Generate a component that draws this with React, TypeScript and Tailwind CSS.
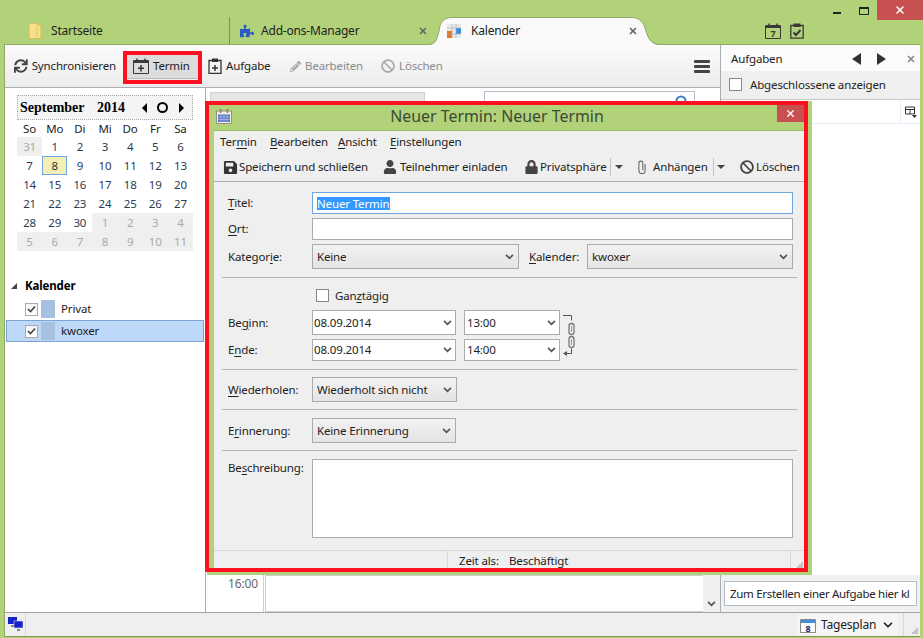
import { ChevronDown, X } from "lucide-react";
import type { ReactNode } from "react";
import { FaBan, FaLock, FaPencilAlt, FaPuzzlePiece, FaSave, FaSync, FaUser } from "react-icons/fa";

const Key = ({ children }: { children: ReactNode }) => (
  <span className="underline underline-offset-2 decoration-1">{children}</span>
);

const Chevron = ({ className = "" }: { className?: string }) => (
  <svg viewBox="0 0 10 7" className={`w-[9px] h-[6px] shrink-0 ${className}`}>
    <path d="M1 1l4 4 4-4" fill="none" stroke="#555" strokeWidth="2" />
  </svg>
);

const CalIcon = ({ children, className = "" }: { children?: ReactNode; className?: string }) => (
  <svg viewBox="0 0 16 16" className={`w-4 h-4 shrink-0 ${className}`}>
    <path d="M.5 2.500h15v13H.5z" fill="none" stroke="#3a3a3a" />
    <path d="M1 2.500h14v2.500H1z" fill="#3a3a3a" />
    <path d="M4 .5v3M12 .5v3" stroke="#3a3a3a" strokeWidth="1.500" />
    {children}
  </svg>
);

const Grip = ({ className = "" }: { className?: string }) => (
  <svg viewBox="0 0 6 6" className={`w-[6px] h-[6px] ${className}`}>
    <path d="M4 0h2v2H4zM2 2h2v2H2zM4 2h2v2H4zM0 4h2v2H0zM2 4h2v2H2zM4 4h2v2H4z" fill="#c4c4c4" />
  </svg>
);

const DownArrow = ({ className = "" }: { className?: string }) => (
  <span className={`w-0 h-0 border-x-[4px] border-x-transparent border-t-[4px] border-t-[#444] ${className}`} />
);

const Tool = ({ icon, label, dim, className = "" }: { icon: ReactNode; label: string; dim?: boolean; className?: string }) => (
  <div className={`flex items-center gap-[4px] h-[25px] whitespace-nowrap shrink-0 ${dim ? "text-[#8a8a8a]" : "text-[#222]"} ${className}`}>
    {icon}
    <span>{label}</span>
  </div>
);

const days = [
  [31, 1, 2, 3, 4, 5, 6],
  [7, 8, 9, 10, 11, 12, 13],
  [14, 15, 16, 17, 18, 19, 20],
  [21, 22, 23, 24, 25, 26, 27],
  [28, 29, 30, 1, 2, 3, 4],
  [5, 6, 7, 8, 9, 10, 11],
];

const MiniMonth = () => (
  <div className="w-[176px]">
    <div className="h-[25px] flex items-center border border-dotted border-[#aaa] bg-[#f4f4f4] text-black font-bold pl-[2px] text-[14px] tracking-normal font-['Liberation_Serif',serif]">
      <span className="w-[77px]">September</span>
      <span className="w-[45px]">2014</span>
      <span className="w-0 h-0 border-y-[5px] border-y-transparent border-r-[5px] border-r-black" />
      <span className="w-[11px] h-[11px] rounded-full border-2 border-black ml-[10px]" />
      <span className="w-0 h-0 border-y-[5px] border-y-transparent border-l-[5px] border-l-black ml-[11px]" />
    </div>
    <div className="grid grid-cols-7 text-center h-[17px] items-center text-[#222]">
      {["So", "Mo", "Di", "Mi", "Do", "Fr", "Sa"].map((d) => (
        <span key={d}>{d}</span>
      ))}
    </div>
    {days.map((week, w) => (
      <div key={w} className="grid grid-cols-7 text-center h-[19px] leading-[19px]">
        {week.map((d, i) => {
          const out = (w === 0 && i === 0) || (w === 4 && i > 2) || w === 5;
          const today = w === 1 && i === 1;
          return (
            <span
              key={i}
              className={
                today
                  ? "bg-[#f5eeb5] border border-[#6fa8dc] leading-[17px] text-[#333]"
                  : out
                    ? "bg-[#efefef] text-[#aaa]"
                    : "text-[#2d3a55]"
              }
            >
              {d}
            </span>
          );
        })}
      </div>
    ))}
  </div>
);

const CalRow = ({ name, selected }: { name: string; selected?: boolean }) => (
  <div
    className={`h-[22px] flex items-center pl-[18px] border ${
      selected ? "bg-[#bdd8f8] border-[#7ba2d2]" : "border-transparent"
    }`}
  >
    <span className="w-[13px] h-[13px] border border-[#aaa] bg-gradient-to-b from-[#f4f4f4] to-white flex items-center justify-center">
      <svg viewBox="0 0 9 8" className="w-[9px] h-[8px]">
        <path d="M1 4l2.500 2.500L8 1.500" fill="none" stroke="#444" strokeWidth="1.600" />
      </svg>
    </span>
    <span className="w-[14px] h-[18px] ml-[3px] bg-[#a6c1e0]" />
    <span className="ml-[6px] text-[#222]">{name}</span>
  </div>
);

const Select = ({ value, className = "" }: { value: string; className?: string }) => (
  <div
    className={`h-[25px] flex items-center justify-between pl-[4px] pr-[4px] border border-[#ababab] bg-gradient-to-b from-[#f2f2f2] to-[#e4e4e4] whitespace-nowrap ${className}`}
  >
    <span>{value}</span>
    <Chevron />
  </div>
);

const Combo = ({ value, className = "" }: { value: string; className?: string }) => (
  <div className={`bg-white border border-[#ababab] flex items-center justify-between pr-[3px] ${className}`}>
    <span>{value}</span>
    <Chevron />
  </div>
);

const Rule = ({ className = "" }: { className?: string }) => (
  <div className={`h-[1px] bg-[#b5b5b5] ml-[8px] mr-[7px] shrink-0 ${className}`} />
);

const Label = ({ children }: { children: ReactNode }) => (
  <span className="w-[84px] shrink-0 whitespace-nowrap">{children}</span>
);

const DialogBody = () => (
  <div className="flex-1 flex flex-col min-h-0 bg-[#efefef] text-[#222]">
    <div className="h-[23px] flex items-center pl-[6px] pb-[2px] shrink-0">
      <span className="w-[50px]">Ter<Key>m</Key>in</span>
      <span className="w-[68px]"><Key>B</Key>earbeiten</span>
      <span className="w-[52px]"><Key>A</Key>nsicht</span>
      <span><Key>E</Key>instellungen</span>
    </div>
    <div className="h-[28px] flex items-center pl-[9px] pb-[1px] border-b border-[#aeaeae] whitespace-nowrap shrink-0">
      <FaSave className="w-[15px] h-[15px] shrink-0 text-[#333]" />
      <span className="ml-[1px] w-[129px] shrink-0">Speichern und schließen</span>
      <FaUser className="w-[14px] h-[14px] ml-[15px] shrink-0 text-[#444]" />
      <span className="ml-[3px] w-[108px] shrink-0">Teilnehmer einladen</span>
      <FaLock className="w-[13px] h-[14px] ml-[17px] shrink-0 text-[#444]" />
      <span className="ml-[2px] w-[65px] shrink-0">Privatsphäre</span>
      <span className="w-[1px] h-[18px] bg-[#c4c4c4] ml-[5px] shrink-0" />
      <DownArrow className="ml-[4px] shrink-0" />
      <svg viewBox="0 0 9 16" className="w-[8px] h-[15px] ml-[15px] shrink-0">
        <path d="M8 4v7.500a3.500 3.500 0 0 1-7 0V3a2.200 2.200 0 0 1 4.400 0v8" fill="none" stroke="#666" strokeWidth="1.200" />
      </svg>
      <span className="ml-[7px] w-[55px] shrink-0">Anhängen</span>
      <span className="w-[1px] h-[18px] bg-[#c4c4c4] ml-[5px] shrink-0" />
      <DownArrow className="ml-[3px] shrink-0" />
      <FaBan className="w-[14px] h-[14px] ml-[15px] shrink-0 text-[#444]" />
      <span className="ml-[2px]">Löschen</span>
    </div>

    <div className="flex flex-col pt-[10px] flex-1 min-h-0">
      <div className="flex items-center h-[22px] pl-[14px] mr-[11px] shrink-0">
        <Label><Key>T</Key>itel:</Label>
        <div className="flex-1 h-[22px] bg-white border border-[#6ea6e0] flex items-center pl-[4px]">
          <span className="bg-[#3399ff] text-white leading-[13px] w-[73px] whitespace-nowrap">Neuer Termin</span>
        </div>
      </div>
      <div className="flex items-center h-[22px] mt-[4px] pl-[14px] mr-[11px] shrink-0">
        <Label><Key>O</Key>rt:</Label>
        <div className="flex-1 h-[22px] bg-white border border-[#ababab]" />
      </div>
      <div className="flex items-center mt-[4px] pl-[14px] mr-[11px] shrink-0">
        <Label>Kategor<Key>i</Key>e:</Label>
        <Select value="Keine" className="w-[207px]" />
        <span className="ml-[10px] w-[58px]"><Key>K</Key>alender:</span>
        <Select value="kwoxer" className="flex-1" />
      </div>
      <Rule className="mt-[8px]" />

      <div className="h-[23px] mt-[6px] flex items-center pl-[102px] shrink-0">
        <span className="w-[13px] h-[13px] border border-[#888] bg-white" />
        <span className="ml-[6px]">Gan<Key>z</Key>tägig</span>
      </div>
      <div className="flex items-center mt-[3px] pl-[14px] shrink-0">
        <div className="flex flex-col gap-[4px]">
          <div className="flex items-center">
            <Label>Be<Key>g</Key>inn:</Label>
            <Combo value="08.09.2014" className="w-[144px] h-[25px] pl-[1px]" />
            <Combo value="13:00" className="w-[96px] h-[25px] ml-[8px] pl-[2px]" />
          </div>
          <div className="flex items-center">
            <Label>E<Key>n</Key>de:</Label>
            <Combo value="08.09.2014" className="w-[144px] h-[22px] pl-[1px]" />
            <Combo value="14:00" className="w-[96px] h-[22px] ml-[8px] pl-[2px]" />
          </div>
        </div>
        <svg viewBox="0 0 14 44" className="w-[14px] h-[44px] ml-[2px]">
          <path d="M1 1.500h8.500v5" fill="none" stroke="#555" />
          <path d="M9.500 34.500v5H2" fill="none" stroke="#555" />
          <path d="M5 37l-4 2.500L5 42z" fill="#555" />
          <rect x="7" y="9.500" width="5" height="11" rx="2.500" fill="none" stroke="#777" strokeWidth="1.300" />
          <rect x="7" y="22.500" width="5" height="11" rx="2.500" fill="none" stroke="#777" strokeWidth="1.300" />
          <path d="M9.500 12v6M9.500 25v6" stroke="#999" />
        </svg>
      </div>
      <Rule className="mt-[8px]" />

      <div className="flex items-center mt-[7px] pl-[14px] shrink-0">
        <Label><Key>W</Key>iederholen:</Label>
        <Select value="Wiederholt sich nicht" className="w-[145px]" />
      </div>
      <Rule className="mt-[7px]" />

      <div className="flex items-center mt-[8px] pl-[14px] shrink-0">
        <Label>E<Key>r</Key>innerung:</Label>
        <Select value="Keine Erinnerung" className="w-[144px]" />
      </div>
      <Rule className="mt-[7px]" />

      <div className="flex mt-[8px] pl-[14px] mr-[11px] h-[79px] shrink-0">
        <Label>Be<Key>s</Key>chreibung:</Label>
        <div className="flex-1 bg-white border border-[#ababab]" />
      </div>

      <div className="mt-[12px] flex-1 min-h-0 border-t border-[#d8d8d8] flex items-stretch whitespace-nowrap">
        <span className="w-[234px] border-r border-[#d8d8d8] shrink-0" />
        <span className="ml-[11px] w-[50px] pt-[1px]">Zeit als:</span>
        <span className="pt-[1px]">Beschäftigt</span>
        <span className="ml-auto w-[14px] border-l border-[#d8d8d8] flex items-end justify-end">
          <Grip className="mr-[1px]" />
        </span>
      </div>
    </div>
  </div>
);

const Dialog = () => (
  <div className="absolute left-[207px] top-[101px] w-[605px] h-[474px] bg-[#b1d279] flex flex-col pl-[7px] pr-[8px] pt-[4px] pb-[7px]">
    <div className="h-[26px] relative flex items-center justify-center pb-[1px] text-[15.900px] tracking-normal text-[#3c4a35] border-b border-[#9db96e] shrink-0">
      <svg viewBox="0 0 16 16" className="absolute left-[2px] top-[3px] w-4 h-4">
        <path d="M.5 3h15v12.500H.5z" fill="#f0ecdf" stroke="#9a8f7c" />
        <path d="M2 6.500h12v7.500H2z" fill="#5b78c7" />
        <path d="M2 9h12M2 11.500h12M5 6.500V14M8 6.500V14M11 6.500V14" stroke="#c9d4f0" strokeWidth=".5" />
        <path d="M4.500 1v4M11.500 1v4" stroke="#8a7f6c" strokeWidth="1.500" />
      </svg>
      <span className="mr-[24px]">Neuer Termin: Neuer Termin</span>
      <span className="absolute right-0 top-0 w-[27px] h-[17px] bg-[#c75050] flex items-center justify-center">
        <X size={11} strokeWidth={3} className="text-white" />
      </span>
    </div>
    <DialogBody />
  </div>
);

export default function App() {
  return (
    <div className="font-['Noto_Sans','Open_Sans',sans-serif] relative w-[923px] h-[638px] overflow-hidden bg-[#b1d279] text-[11.500px] tracking-[-0.150px] flex flex-col">
      {/* title bar and tabs */}
      <div className="h-[44px] relative shrink-0 flex items-end text-[12px] tracking-[-0.200px] text-[#222]">
        <div className="absolute right-0 top-0 h-[20px] flex items-center">
          <span className="w-[8px] h-[2px] bg-[#222] mr-[18px] mt-[6px]" />
          <span className="w-[10px] h-[8px] border border-t-2 border-[#222] mr-[8px] mt-[1px]" />
          <span className="w-[46px] h-[20px] bg-[#c75050] flex items-center justify-center">
            <X size={12} strokeWidth={3} className="text-white" />
          </span>
        </div>

        <div className="w-[229px] h-[27px] pl-[28px] flex items-center shrink-0">
          <svg viewBox="0 0 14 16" className="w-[14px] h-4 shrink-0">
            <path d="M1 .5h8l4 3V15.500H1z" fill="#f6e08a" stroke="#d8bd5c" />
            <path d="M9 .5v15" stroke="#e0c66a" />
          </svg>
          <span className="ml-[9px]">Startseite</span>
        </div>
        <div className="w-[1px] h-[27px] bg-[#7d8d66] shrink-0" />
        <div className="w-[202px] h-[27px] pl-[10px] pr-[4px] flex items-center shrink-0">
          <FaPuzzlePiece className="w-[14px] h-[14px] shrink-0 text-[#2c5bc4]" />
          <span className="ml-[7px] flex-1">Add-ons-Manager</span>
          <X size={10} strokeWidth={4} className="text-[#666]" />
        </div>
        <div className="relative z-10 -ml-[4px] -mb-[1px] w-[232px] h-[28px] pl-[19px] pr-[22px] flex items-center shrink-0">
          <svg viewBox="0 0 232 28" className="absolute left-0 top-0 w-[232px] h-[28px]">
            <path d="M0 28C8 28 9 22 11 14 12 6 15 .5 24 .5H204C212 .5 216 6 218 14 220 22 224 28 232 28z" fill="#f9f9f9" />
            <path d="M0 27.500C8 27.500 9 22 11 14 12 6 15 .5 24 .5H204C212 .5 216 6 218 14 220 22 224 27.500 232 27.500" fill="none" stroke="#8fa866" />
          </svg>
          <svg viewBox="0 0 14 14" className="relative w-[14px] h-[14px] shrink-0">
            <path d="M0 0h14v14H0z" fill="#e8e8e8" />
            <path d="M0 7h5v7H0z" fill="#e87722" />
            <path d="M9 4h5v6H9z" fill="#3d8fe0" />
            <path d="M5 0v14M9 0v14M0 4h14M0 10h14" stroke="#aaa" strokeWidth=".6" />
          </svg>
          <span className="relative ml-[10px] flex-1">Kalender</span>
          <X size={10} strokeWidth={4} className="relative text-[#666]" />
        </div>

        <div className="ml-[105px] mb-[5px] flex gap-[9px] shrink-0">
          <CalIcon>
            <text x="8" y="14" fontSize="9" fontWeight="bold" textAnchor="middle" fill="#3a3a3a">7</text>
          </CalIcon>
          <svg viewBox="0 0 14 16" className="w-[14px] h-4">
            <path d="M.8 2.500h12.400v12.700H.8z" fill="none" stroke="#3a3a3a" strokeWidth="1.300" />
            <path d="M3.500 .5h7v3.500h-7z" fill="#3a3a3a" />
            <path d="M3.500 9.500l2.500 2.500 4.500-5" fill="none" stroke="#3a3a3a" strokeWidth="2" />
          </svg>
        </div>
      </div>

      {/* window content */}
      <div className="flex-1 min-h-0 ml-[4px] mr-[3px] border-l border-t border-[#8fa866] bg-white flex flex-col">
        <div className="flex-1 min-h-0 flex">
          {/* main pane */}
          <div className="flex-1 min-w-0 flex flex-col">
            <div className="h-[43px] border-b border-[#a9b0b5] bg-gradient-to-b from-[#fbfbfb] to-[#ececec] flex items-center pl-[9px] shrink-0">
              <Tool className="w-[102px]" icon={<FaSync className="w-[14px] h-[14px] text-[#444]" />} label="Synchronisieren" />
              <Tool
                className="ml-[11px] w-[71px] bg-[#dcdcdc] border-b border-[#bbb] pl-[6px]"
                icon={
                  <CalIcon>
                    <path d="M8 7v6.500M5 10.250h6" stroke="#333" strokeWidth="1.500" />
                  </CalIcon>
                }
                label="Termin"
              />
              <Tool
                className="ml-[10px] w-[63px]"
                icon={
                  <svg viewBox="0 0 14 16" className="w-[14px] h-4">
                    <path d="M1 2.500h12v13H1z" fill="none" stroke="#333" strokeWidth="1.300" />
                    <path d="M4 .5h6v3.500H4z" fill="#333" />
                    <path d="M7 7v6M4 10h6" stroke="#333" strokeWidth="1.500" />
                  </svg>
                }
                label="Aufgabe"
              />
              <Tool dim className="ml-[19px] w-[73px]" icon={<FaPencilAlt className="w-[13px] h-[13px] text-[#aaa]" />} label="Bearbeiten" />
              <Tool dim className="ml-[18px]" icon={<FaBan className="w-[14px] h-[14px] text-[#aaa]" />} label="Löschen" />
              <div className="ml-auto mr-[10px] flex flex-col gap-[2px]">
                <span className="w-[16px] h-[3px] rounded-[1px] bg-[#444]" />
                <span className="w-[16px] h-[3px] rounded-[1px] bg-[#444]" />
                <span className="w-[16px] h-[3px] rounded-[1px] bg-[#444]" />
              </div>
            </div>
            <div className="flex-1 min-h-0 flex">
              {/* left calendar sidebar */}
              <div className="w-[201px] shrink-0 border-r border-[#a9b0b5] flex flex-col pt-[7px]">
                <div className="pl-[12px]"><MiniMonth /></div>
                <div className="mt-[25px] h-[20px] flex items-center pl-[6px] font-bold text-black">
                  <span className="w-0 h-0 border-b-[6px] border-l-[6px] border-l-transparent border-b-[#444]" />
                  <span className="ml-[8px]">Kalender</span>
                </div>
                <div className="mt-[2px] ml-[1px] mr-[1px]">
                  <CalRow name="Privat" />
                  <CalRow name="kwoxer" selected />
                </div>
              </div>
              {/* day view, mostly covered by the dialog */}
              <div className="flex-1 min-w-0 flex flex-col">
                <div className="flex-1 min-h-0 flex items-start pt-[4px] pl-[4px]">
                  <div className="w-[215px] h-[20px] bg-[#e5e7e7] border border-[#cfcfcf] pl-[8px] pt-[4px] whitespace-nowrap text-black">
                    Termine in den nächsten 7 Tagen
                  </div>
                  <span className="ml-[24px] mt-[7px] w-[30px] text-[#222]">Enthält:</span>
                  <div className="ml-[5px] w-[211px] h-[20px] -mt-[1px] bg-white border border-[#b5bec8] flex justify-end pr-[7px] pt-[3px]">
                    <svg viewBox="0 0 12 12" className="w-[12px] h-[12px]">
                      <circle cx="6" cy="6" r="4.500" fill="none" stroke="#3a80c8" strokeWidth="2" />
                    </svg>
                  </div>
                </div>
                <div className="h-[37px] flex shrink-0">
                  <div className="w-[58px] border-r border-[#cfcfcf] pr-[5px] text-right text-[#666] text-[12px]">16:00</div>
                  <div className="flex-1 ml-[1px] border-l border-t border-b border-[#cfcfcf]" />
                  <div className="w-[17px] bg-[#f0f0f0] flex items-end justify-center pb-[5px]"><Chevron /></div>
                </div>
              </div>
            </div>
          </div>
          {/* task pane */}
          <div className="w-[200px] shrink-0 border-l border-[#a9b0b5] flex flex-col whitespace-nowrap">
            <div className="h-[26px] bg-[#fbfbfb] flex items-center pl-[10px] pr-[4px] pt-[1px] shrink-0 text-[#222]">
              <span className="flex-1">Aufgaben</span>
              <span className="w-0 h-0 border-y-[6px] border-y-transparent border-r-[9px] border-r-[#333]" />
              <span className="w-0 h-0 border-y-[6px] border-y-transparent border-l-[9px] border-l-[#333] ml-[16px]" />
              <X size={10} strokeWidth={4} className="ml-[20px] text-[#8a8a8a]" />
            </div>
            <div className="h-[29px] bg-[#efefef] flex items-center pl-[8px] pb-[1px] border-b border-[#c8c8c8] shrink-0 text-[#222]">
              <span className="w-[13px] h-[13px] border border-[#888] bg-white" />
              <span className="ml-[8px]">Abgeschlossene anzeigen</span>
            </div>
            <div className="h-[24px] border-b border-[#e5eefb] flex items-center justify-end shrink-0">
              <span className="h-full w-[20px] border-l border-[#e5eefb] flex items-center justify-center">
                <svg viewBox="0 0 12 12" className="w-[12px] h-[12px]">
                  <path d="M.5 1h9v7H.5zM.5 3.500h9M5 3.500V8" fill="none" stroke="#333" />
                  <path d="M7 9h5l-2.500 3z" fill="#333" />
                </svg>
              </span>
            </div>
            <div className="flex-1 min-h-0" />
            <div className="h-[37px] bg-[#f0f0f0] flex items-center pl-[3px] pr-[3px] shrink-0">
              <div className="w-[193px] h-[25px] bg-white border border-[#b5bec8] pl-[5px] pr-[3px] text-[#222] leading-[23px] tracking-[-0.300px]">
                <div className="overflow-hidden">Zum Erstellen einer Aufgabe hier kl</div>
              </div>
            </div>
          </div>
        </div>
        {/* status bar */}
        <div className="h-[25px] border-t border-[#a4a4a4] border-b border-b-[#7d9a55] bg-[#efefef] flex items-center shrink-0">
          <div className="h-full w-[21px] border-r border-[#d8d8d8] flex items-center justify-center">
            <svg viewBox="0 0 15 15" className="w-[15px] h-[15px]">
              <path d="M0 0h9v7H0z" fill="#1420c8" />
              <path d="M6 4h9v7H6z" fill="#1420c8" stroke="#ddd" strokeWidth=".6" />
              <path d="M3 8h3v2H3zM9 12h3v2H9z" fill="#888" />
            </svg>
          </div>
          <div className="ml-auto w-[101px] h-[21px] bg-[#f5f5f5] flex items-center pl-[3px] text-[#222] text-[12px] tracking-[-0.200px]">
            <svg viewBox="0 0 16 16" className="w-4 h-4 shrink-0">
              <path d="M.5 2.500h15v13H.5z" fill="#fff" stroke="#888" />
              <path d="M1 3h14v3H1z" fill="#3d8fe0" />
              <text x="8" y="14.500" fontSize="9" fontWeight="bold" textAnchor="middle" fill="#1a237e">8</text>
            </svg>
            <span className="ml-[5px] w-[54px]">Tagesplan</span>
            <ChevronDown size={14} strokeWidth={3} className="ml-[6px] text-[#222]" />
          </div>
          <div className="h-full w-[17px] ml-[5px] border-l border-[#d8d8d8] flex items-end justify-end pb-[2px] pr-[2px]">
            <Grip />
          </div>
        </div>
      </div>
      <div className="h-[1px] shrink-0" />

      <Dialog />

      {/* red highlights drawn over the screenshot */}
      <div className="absolute left-[205px] top-[101px] w-[603px] h-[471px] border-[4px] border-[#ff1020]" />
      <div className="absolute left-[123px] top-[51px] w-[79px] h-[33px] border-[4px] border-[#ff1020]" />
    </div>
  );
}
